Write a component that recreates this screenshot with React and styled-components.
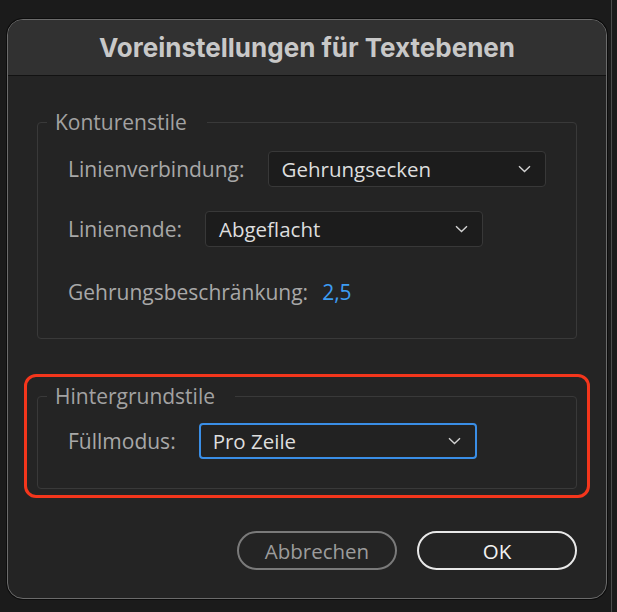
import styled, { createGlobalStyle } from "styled-components";

const GlobalStyle = createGlobalStyle`
  html, body {
    margin: 0;
    background: #1b1b1b;
  }
  body {
    font-family: "Open Sans", "Noto Sans", sans-serif;
  }
`;

const Screen = styled.div`
  width: 612px;
  height: 612px;
  box-sizing: border-box;
  padding: 19px 0 0 7px;
  border-right: 1px solid #4b4b4b;
`;

const Dialog = styled.div`
  width: 600px;
  box-sizing: border-box;
  border: 1px solid #6b6b6b;
  border-radius: 16px;
  background: #242424;
  overflow: hidden;
  box-shadow: 0 0 0 1px #0d0d0d;
`;

const TitleBar = styled.div`
  height: 55px;
  display: flex;
  align-items: center;
  justify-content: center;
  background: #313131;
  border-bottom: 1px solid #121212;
`;

const Title = styled.h1`
  margin: 0;
  font-family: Inter, "Liberation Sans", sans-serif;
  font-size: 26px;
  font-weight: 700;
  color: #c8c8c8;
`;

const Body = styled.div`
  padding: 33px 29px 28px;
`;

const Group = styled.fieldset`
  margin: 0;
  padding: 0;
  min-width: 0;
  border: 1px solid #393939;
  border-radius: 4px;
`;

const Legend = styled.legend`
  margin-left: 9px;
  padding: 0 20px 0 8px;
  font-size: 21px;
  line-height: 26px;
  color: #a2a2a2;
`;

const GroupContent = styled.div`
  display: flex;
  flex-direction: column;
  gap: 24px;
  padding: ${({ $top }) => $top}px 30px ${({ $bottom }) => $bottom}px;
`;

const Row = styled.div`
  display: flex;
  align-items: center;
  gap: ${({ $gap }) => $gap || 23}px;
  height: 36px;
  margin-top: ${({ $shift }) => $shift || 0}px;
`;

const Label = styled.span`
  font-size: 21px;
  color: #a8a8a8;
  white-space: nowrap;
`;

const Value = styled.span`
  font-size: 21px;
  color: #3d9cf2;
`;

const Select = styled.div`
  width: 278px;
  height: 36px;
  box-sizing: border-box;
  display: flex;
  align-items: center;
  justify-content: space-between;
  padding: 0 14px 0 ${({ $focused }) => ($focused ? 12 : 13)}px;
  border: ${({ $focused }) => ($focused ? "2px solid #3a8ee6" : "1px solid #383838")};
  border-radius: 4px;
  background: ${({ $focused }) => ($focused ? "#222222" : "#1c1c1c")};
  color: #dedede;
  font-size: 20.5px;
`;

const Highlight = styled.div`
  margin: 35px -13px 0;
  padding: 6px 10px;
  border: 3px solid #f4361c;
  border-radius: 12px;
`;

const Footer = styled.div`
  display: flex;
  justify-content: flex-end;
  gap: 20px;
  margin-top: 33px;
`;

const Button = styled.button`
  width: 160px;
  height: 39px;
  box-sizing: border-box;
  border-radius: 20px;
  background: transparent;
  font-family: "Open Sans", "Noto Sans", sans-serif;
  font-size: 20.5px;
  border: 2px solid ${({ $primary }) => ($primary ? "#e8e8e8" : "#7a7a7a")};
  color: ${({ $primary }) => ($primary ? "#f2f2f2" : "#9c9c9c")};
  font-weight: ${({ $primary }) => ($primary ? 500 : 400)};
`;

const Chevron = () => (
  <svg width="13" height="8" viewBox="0 0 13 8">
    <path d="M1 1.2 L6.5 6.5 L12 1.2" fill="none" stroke="#d2d2d2" strokeWidth="1.4" />
  </svg>
);

const Dropdown = ({ value, focused }) => (
  <Select $focused={focused}>
    <span>{value}</span>
    <Chevron />
  </Select>
);

export default function App() {
  return (
    <>
      <GlobalStyle />
      <Screen>
        <Dialog>
          <TitleBar>
            <Title>Voreinstellungen für Textebenen</Title>
          </TitleBar>
          <Body>
            <Group>
              <Legend>Konturenstile</Legend>
              <GroupContent $top={16} $bottom={28}>
                <Row>
                  <Label>Linienverbindung:</Label>
                  <Dropdown value="Gehrungsecken" />
                </Row>
                <Row>
                  <Label>Linienende:</Label>
                  <Dropdown value="Abgeflacht" />
                </Row>
                <Row $gap={14} $shift={3}>
                  <Label>Gehrungsbeschränkung:</Label>
                  <Value>2,5</Value>
                </Row>
              </GroupContent>
            </Group>
            <Highlight>
              <Group>
                <Legend>Hintergrundstile</Legend>
                <GroupContent $top={14} $bottom={29}>
                  <Row>
                    <Label>Füllmodus:</Label>
                    <Dropdown value="Pro Zeile" focused />
                  </Row>
                </GroupContent>
              </Group>
            </Highlight>
            <Footer>
              <Button>Abbrechen</Button>
              <Button $primary>OK</Button>
            </Footer>
          </Body>
        </Dialog>
      </Screen>
    </>
  );
}
